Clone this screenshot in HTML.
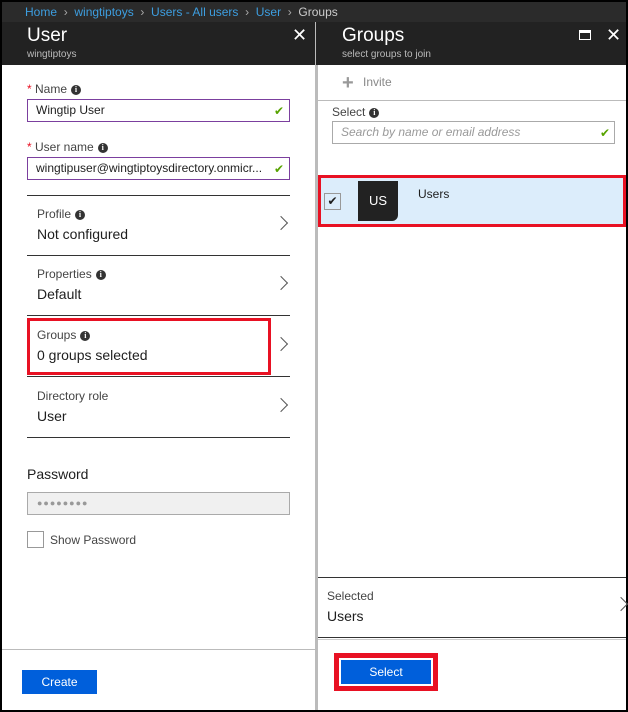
<!DOCTYPE html>
<html><head><style>
*{box-sizing:border-box;margin:0;padding:0}
body{width:628px;height:712px;background:#000;font-family:"Segoe UI","Liberation Sans",sans-serif;position:relative;overflow:hidden;color:#1e1e1e}
.a{position:absolute}
.lbl{font-size:12px;color:#444}
.val{font-size:14px;color:#1e1e1e}
.info{display:inline-block;width:10px;height:10px;border-radius:50%;background:#333;color:#fff;font-size:8px;line-height:10px;text-align:center;font-weight:bold;vertical-align:1px;margin-left:4px;font-family:"Liberation Serif",serif}
.hr{height:1px;background:#333}
.chev{width:10px;height:10px;border-right:1.3px solid #555;border-top:1.3px solid #555;transform:rotate(45deg)}
.inp{border:1px solid #7b3f9e;background:#fff;font-size:12px;padding-left:8px;line-height:20px}
.ok{color:#57a300;font-size:12px}
</style></head><body>
<div class="a" style="left:2px;top:2px;width:624px;height:20px;background:#2b2b2b;font-size:12px;line-height:20px;color:#3d9ee0;padding-left:23px;white-space:pre">Home  <span style="color:#aaa">›</span>  wingtiptoys  <span style="color:#aaa">›</span>  Users - All users  <span style="color:#aaa">›</span>  User  <span style="color:#aaa">›</span>  <span style="color:#ccc">Groups</span></div>
<!-- left blade -->
<div class="a" style="left:2px;top:22px;width:313px;height:688px;background:#fff"></div>
<div class="a" style="left:2px;top:22px;width:313px;height:43px;background:#222"></div>
<div class="a" style="left:27px;top:25px;font-size:19px;color:#fff">User</div>
<div class="a" style="left:27px;top:49px;font-size:10px;color:#bbb">wingtiptoys</div>
<div class="a" style="left:292px;top:25px;font-size:18px;color:#fff">✕</div>
<div class="a lbl" style="left:27px;top:82px"><span style="color:#e81123">*</span> Name<span class="info">i</span></div>
<div class="a inp" style="left:27px;top:99px;width:263px;height:23px">Wingtip User<span class="a ok" style="right:5px;top:1px">✔</span></div>
<div class="a lbl" style="left:27px;top:140px"><span style="color:#e81123">*</span> User name<span class="info">i</span></div>
<div class="a inp" style="left:27px;top:157px;width:263px;height:23px">wingtipuser@wingtiptoysdirectory.onmicr...<span class="a ok" style="right:5px;top:1px">✔</span></div>
<div class="a hr" style="left:27px;top:195px;width:263px"></div>
<div class="a lbl" style="left:37px;top:207px">Profile<span class="info">i</span></div>
<div class="a val" style="left:37px;top:226px">Not configured</div>
<div class="a chev" style="left:276px;top:218px"></div>
<div class="a hr" style="left:27px;top:255px;width:263px"></div>
<div class="a lbl" style="left:37px;top:267px">Properties<span class="info">i</span></div>
<div class="a val" style="left:37px;top:286px">Default</div>
<div class="a chev" style="left:276px;top:278px"></div>
<div class="a hr" style="left:27px;top:315px;width:263px"></div>
<div class="a" style="left:27px;top:318px;width:244px;height:57px;border:3px solid #e81123"></div>
<div class="a lbl" style="left:37px;top:328px">Groups<span class="info">i</span></div>
<div class="a val" style="left:37px;top:347px">0 groups selected</div>
<div class="a chev" style="left:276px;top:339px"></div>
<div class="a hr" style="left:27px;top:376px;width:263px"></div>
<div class="a lbl" style="left:37px;top:389px">Directory role</div>
<div class="a val" style="left:37px;top:408px">User</div>
<div class="a chev" style="left:276px;top:400px"></div>
<div class="a hr" style="left:27px;top:437px;width:263px"></div>
<div class="a" style="left:27px;top:466px;font-size:14px">Password</div>
<div class="a" style="left:27px;top:492px;width:263px;height:23px;background:#f0f0f0;border:1px solid #aaa;color:#999;font-size:9px;line-height:21px;padding-left:9px;letter-spacing:1px">●●●●●●●●</div>
<div class="a" style="left:27px;top:531px;width:17px;height:17px;border:1px solid #999"></div>
<div class="a lbl" style="left:50px;top:533px">Show Password</div>
<div class="a" style="left:2px;top:649px;width:313px;height:1px;background:#bbb"></div>
<div class="a" style="left:22px;top:670px;width:75px;height:24px;background:#005fdb;color:#fff;font-size:12px;line-height:24px;text-align:center">Create</div>
<!-- divider -->
<div class="a" style="left:315px;top:22px;width:3px;height:688px;background:#bbb"></div>
<!-- right blade -->
<div class="a" style="left:318px;top:22px;width:308px;height:688px;background:#fff"></div>
<div class="a" style="left:316px;top:22px;width:310px;height:43px;background:#222"></div>
<div class="a" style="left:342px;top:25px;font-size:19px;color:#fff">Groups</div>
<div class="a" style="left:342px;top:49px;font-size:10px;color:#bbb">select groups to join</div>
<div class="a" style="left:579px;top:30px;width:12px;height:10px;border:1.5px solid #fff;border-top-width:3px"></div>
<div class="a" style="left:606px;top:25px;font-size:18px;color:#fff">✕</div>
<div class="a" style="left:342px;top:74px;font-size:20px;color:#999;font-weight:bold;line-height:18px">+</div>
<div class="a" style="left:363px;top:75px;font-size:12px;color:#888">Invite</div>
<div class="a" style="left:318px;top:100px;width:308px;height:1px;background:#bbb"></div>
<div class="a lbl" style="left:332px;top:105px">Select<span class="info">i</span></div>
<div class="a" style="left:332px;top:121px;width:283px;height:23px;border:1px solid #aaa;font-size:12px;font-style:italic;color:#999;line-height:20px;padding-left:8px">Search by name or email address<span class="a ok" style="right:4px;top:1px;font-style:normal">✔</span></div>
<div class="a" style="left:318px;top:175px;width:308px;height:52px;background:#dcedfb;border:3px solid #e81123"></div>
<div class="a" style="left:324px;top:193px;width:17px;height:17px;border:1px solid #999;font-size:12px;line-height:15px;text-align:center">✔</div>
<div class="a" style="left:358px;top:181px;width:40px;height:40px;background:#222;border-bottom-right-radius:6px;color:#fff;font-size:13px;line-height:40px;text-align:center">US</div>
<div class="a" style="left:418px;top:187px;font-size:12px">Users</div>
<div class="a hr" style="left:318px;top:577px;width:308px"></div>
<div class="a lbl" style="left:327px;top:589px">Selected</div>
<div class="a val" style="left:327px;top:608px">Users</div>
<div class="a chev" style="left:616px;top:599px"></div>
<div class="a hr" style="left:318px;top:637px;width:308px"></div>
<div class="a" style="left:318px;top:639px;width:308px;height:1px;background:#ccc"></div>
<div class="a" style="left:334px;top:653px;width:104px;height:38px;background:#e81123"></div>
<div class="a" style="left:339px;top:658px;width:94px;height:28px;background:#fff"></div>
<div class="a" style="left:341px;top:660px;width:90px;height:24px;background:#005fdb;color:#fff;font-size:12px;line-height:24px;text-align:center">Select</div>
</body></html>
